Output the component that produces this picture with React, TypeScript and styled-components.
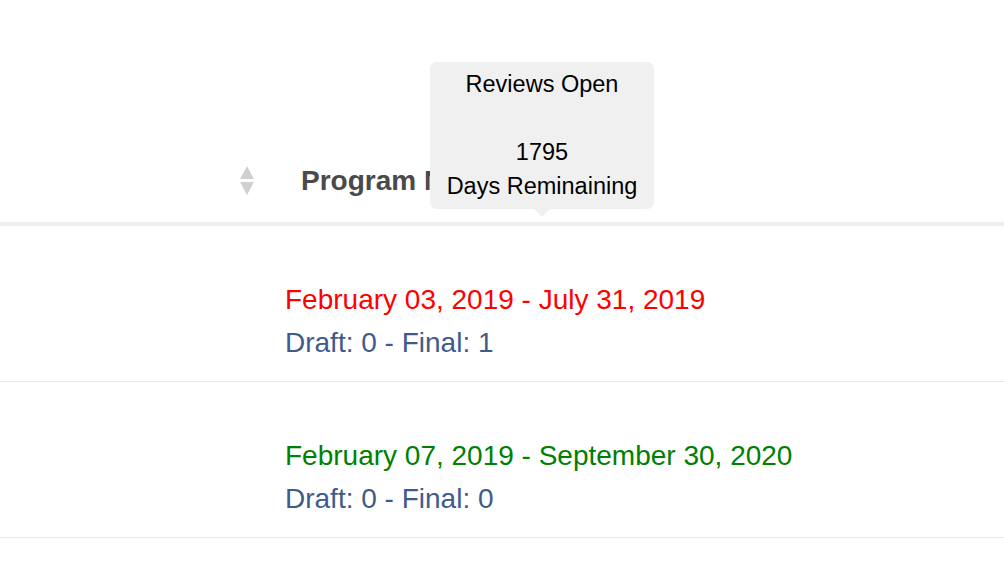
import React from "react";
import styled, { createGlobalStyle } from "styled-components";

const GlobalStyle = createGlobalStyle`
  html, body { margin: 0; padding: 0; background: #ffffff; }
  body { font-family: "Liberation Sans", Arial, Helvetica, sans-serif; }
`;

const Page = styled.div`
  position: relative;
  width: 1004px;
  height: 574px;
  overflow: hidden;
  background: #fff;
`;

const HeaderRow = styled.div`
  display: flex;
  height: 226px;
  box-sizing: border-box;
  padding: 0 0 25px 239px;
  align-items: flex-end;
  gap: 46px;
  border-bottom: 4px solid #eeeeee;
`;

const HeaderLabel = styled.div`
  font-size: 28px;
  font-weight: 700;
  color: #4a4a4a;
  line-height: 32px;
  white-space: nowrap;
`;

const SortIcon = styled.svg`
  width: 16px;
  height: 32px;
  display: block;
`;

const Row = styled.div`
  display: flex;
  flex-direction: column;
  padding: 52px 0 17px 285px;
  border-bottom: 1px solid #e8e8e8;
`;

const DateLine = styled.div<{ $tone: "late" | "open" }>`
  font-size: 28px;
  line-height: 43px;
  color: ${(p) => (p.$tone === "late" ? "#ff0000" : "#008000")};
  white-space: nowrap;
`;

const CountLine = styled.div`
  font-size: 28px;
  line-height: 43px;
  color: #3f5b8c;
  white-space: nowrap;
`;

const Tooltip = styled.div`
  position: absolute;
  left: 430px;
  top: 62px;
  width: 224px;
  box-sizing: border-box;
  padding: 5px 0 6px;
  background: #f0f0f0;
  border-radius: 7px;
  color: #000;
  font-size: 23.5px;
  line-height: 34px;
  text-align: center;

  &::after {
    content: "";
    position: absolute;
    left: 50%;
    bottom: -8px;
    margin-left: -8px;
    border-left: 8px solid transparent;
    border-right: 8px solid transparent;
    border-top: 8px solid #f0f0f0;
  }
`;

const TipLine = styled.div`
  min-height: 34px;
`;

const rows = [
  { range: "February 03, 2019 - July 31, 2019", tone: "late" as const, draft: 0, final: 1 },
  { range: "February 07, 2019 - September 30, 2020", tone: "open" as const, draft: 0, final: 0 },
];

export default function App() {
  return (
    <Page>
      <GlobalStyle />
      <HeaderRow>
        <SortIcon viewBox="0 0 16 32">
          <polygon points="1,14 8,1 15,14" fill="#d0d0d0" />
          <polygon points="1,17 8,30 15,17" fill="#d0d0d0" />
        </SortIcon>
        <HeaderLabel>Program Name</HeaderLabel>
      </HeaderRow>
      {rows.map((r) => (
        <Row key={r.range}>
          <DateLine $tone={r.tone}>{r.range}</DateLine>
          <CountLine>
            Draft: {r.draft} - Final: {r.final}
          </CountLine>
        </Row>
      ))}
      <Tooltip>
        <TipLine>Reviews Open</TipLine>
        <TipLine />
        <TipLine>1795</TipLine>
        <TipLine>Days Reminaining</TipLine>
      </Tooltip>
    </Page>
  );
}
